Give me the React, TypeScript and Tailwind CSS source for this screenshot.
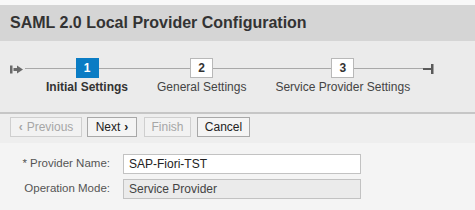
import React from "react";

function StartIcon() {
  return (
    <svg width="14" height="9" viewBox="0 0 14 9" className="block">
      <rect x="0" y="0.5" width="2.5" height="8" fill="#6a6a6a" />
      <rect x="3.5" y="3" width="4" height="3" fill="#6a6a6a" />
      <polygon points="7,0.5 13,4.5 7,8.5" fill="#6a6a6a" />
    </svg>
  );
}

function EndIcon() {
  return (
    <svg width="11" height="10" viewBox="0 0 11 10" className="block">
      <rect x="0" y="4" width="8" height="2" fill="#5a5a5a" />
      <rect x="8" y="0" width="2.5" height="10" fill="#5a5a5a" />
    </svg>
  );
}

function Step({ n, label, active }: { n: number; label: string; active?: boolean }) {
  return (
    <div className="flex flex-col items-center">
      <div
        className={
          active
            ? "w-[23px] h-[20px] bg-[#0a7cc4] text-white text-[12px] font-bold flex items-center justify-center"
            : "w-[23px] h-[20px] bg-white border border-[#b8b8b8] text-[#333] text-[12px] font-bold flex items-center justify-center"
        }
      >
        {n}
      </div>
      <div
        className={
          active
            ? "mt-[2px] text-[12px] leading-[15px] font-bold text-[#333] whitespace-nowrap"
            : "mt-[2px] text-[12px] leading-[15px] text-[#444] whitespace-nowrap"
        }
      >
        {label}
      </div>
    </div>
  );
}

export default function App() {
  return (
    <div
      className="w-[475px] h-[210px] bg-[#f4f4f4] overflow-hidden"
      style={{ fontFamily: '"Liberation Sans", Arial, sans-serif' }}
    >
      <div className="h-[5px] bg-[#f8f8f8]" />
      <div className="h-[36px] bg-[#d5d5d5] pl-[10px] flex items-center text-[16px] font-bold text-[#333]">
        SAML 2.0 Local Provider Configuration
      </div>
      <div className="relative h-[71px] bg-[#ebebeb] pt-[17px]">
        <div className="absolute left-[25px] w-[398px] top-[27px] h-px bg-[#a8a8a8]" />
        <div className="absolute left-[10px] top-[24px]">
          <StartIcon />
        </div>
        <div className="absolute left-[423px] top-[23px]">
          <EndIcon />
        </div>
        <div className="relative flex pl-[46px] gap-[29px]">
          <Step n={1} label="Initial Settings" active />
          <Step n={2} label="General Settings" />
          <Step n={3} label="Service Provider Settings" />
        </div>
      </div>
      <div className="h-[2px] bg-[#c6c6c6]" />
      <div className="h-[29px] bg-[#eeeeee] flex items-start pt-[3px] pl-[10px] text-[12px]">
        <button className="w-[72px] h-[20px] border border-[#cfcfcf] bg-[#f2f2f2] text-[#a6a6a6] flex items-center justify-center">
          <span className="text-[12px] mr-[4px] font-bold">‹</span>Previous
        </button>
        <button className="ml-[5px] w-[50px] h-[20px] border border-[#a8a8a8] bg-[#f4f4f4] text-[#222] flex items-center justify-center">
          Next<span className="ml-[4px] text-[12px] font-bold">›</span>
        </button>
        <button className="ml-[7px] w-[47px] h-[20px] border border-[#cfcfcf] bg-[#f2f2f2] text-[#a6a6a6] flex items-center justify-center">
          Finish
        </button>
        <button className="ml-[6px] w-[53px] h-[20px] border border-[#a8a8a8] bg-[#f4f4f4] text-[#222] flex items-center justify-center">
          Cancel
        </button>
      </div>
      <div className="pt-[11px] flex flex-col gap-[5px] text-[12px]">
        <div className="flex items-center">
          <div className="w-[110px] text-right text-[11.5px] text-[#555] whitespace-nowrap">* Provider Name:</div>
          <div className="ml-[13px] w-[238px] h-[20px] bg-white border border-[#c2c2c2] flex items-center pl-[5px] text-[#222]">
            SAP-Fiori-TST
          </div>
        </div>
        <div className="flex items-center">
          <div className="w-[110px] text-right text-[11.5px] text-[#555] whitespace-nowrap">Operation Mode:</div>
          <div className="ml-[13px] w-[238px] h-[20px] bg-[#ebebeb] border border-[#c2c2c2] flex items-center pl-[5px] text-[#444]">
            Service Provider
          </div>
        </div>
      </div>
    </div>
  );
}
